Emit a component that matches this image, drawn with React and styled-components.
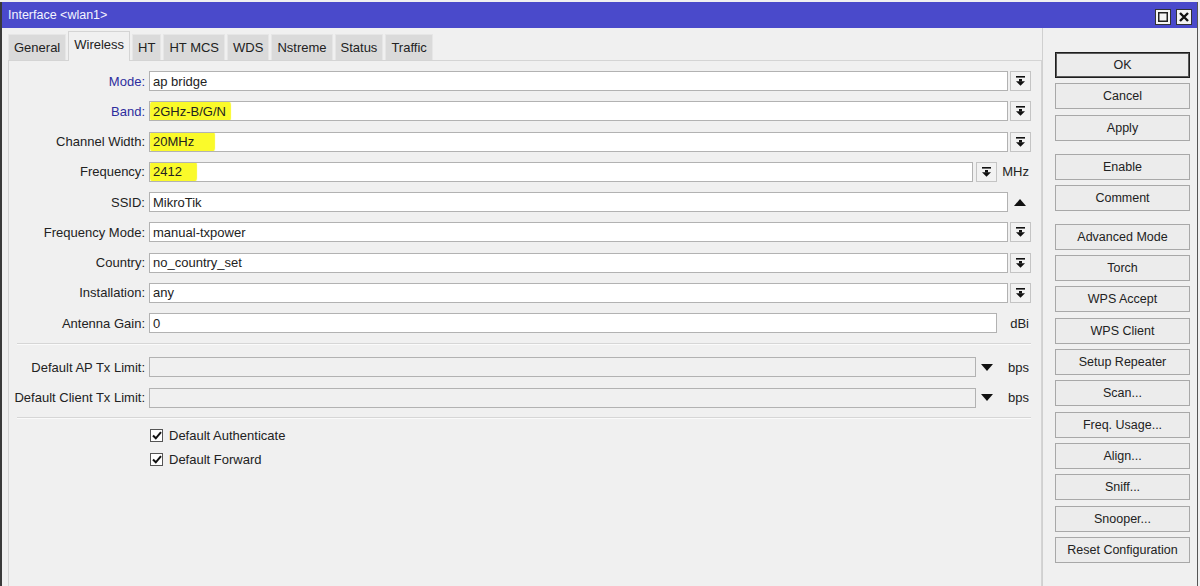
import React from "react";
import styled, { createGlobalStyle, css } from "styled-components";

const Global = createGlobalStyle`
  html, body { margin: 0; padding: 0; background: #f0f0f0; }
  body { font-family: "Liberation Sans", Arial, sans-serif; font-size: 13px; color: #222; }
  * { box-sizing: border-box; }
`;

const Window = styled.div`
  width: 1198px;
  height: 584px;
  margin-top: 2px;
  border-left: 2px solid #3a3a3a;
  border-right: 1px solid #555;
  display: flex;
  flex-direction: column;
  background: #f0f0f0;
  overflow: hidden;
`;

const TitleBar = styled.div`
  height: 26px;
  background: #4a4acb;
  display: flex;
  align-items: center;
  justify-content: space-between;
  padding: 0 5px 0 6px;
  color: #f4f4ff;
  font-size: 12.5px;
`;

const WinButtons = styled.div`
  display: flex;
  gap: 5px;
  margin-top: 4px;
`;

const WinBtn = styled.div`
  width: 16px;
  height: 16px;
  background: #f4f4f4;
  border: 1px solid #333;
  display: flex;
  align-items: center;
  justify-content: center;
`;

const Body = styled.div`
  flex: 1;
  display: flex;
`;

const Main = styled.div`
  width: 1040px;
  padding-left: 6px;
  display: flex;
  flex-direction: column;
`;

const Tabs = styled.div`
  display: flex;
  align-items: flex-end;
  gap: 2px;
  margin-top: 3px;
  height: 29px;
  position: relative;
  z-index: 1;
`;

const Tab = styled.div`
  height: 26px;
  padding: 0 5px;
  display: flex;
  align-items: center;
  background: #dadada;
  border: 1px solid #e6e6e6;
  border-bottom: none;
  color: #222;
  ${(p) =>
    p.$active &&
    css`
      height: 30px;
      margin-bottom: -1px;
      padding-bottom: 5px;
      background: #f0f0f0;
      border: 1px solid #d4d4d4;
      border-bottom: none;
    `}
`;

const Panel = styled.div`
  flex: 1;
  border: 1px solid #d4d4d4;
  border-bottom: none;
  padding-top: 5px;
  display: flex;
  flex-direction: column;
`;

const Row = styled.div`
  height: 30.25px;
  display: flex;
  align-items: center;
  padding-right: 10px;
`;

const Label = styled.div`
  width: 136px;
  margin-right: 4px;
  text-align: right;
  white-space: nowrap;
  color: ${(p) => (p.$changed ? "#2d2d9e" : "#222")};
`;

const Input = styled.div`
  flex: 1;
  height: 20px;
  background: ${(p) => (p.$disabled ? "#f0f0f0" : "#ffffff")};
  border: 1px solid #b2b2b2;
  display: flex;
  align-items: center;
  padding-left: 3px;
  white-space: nowrap;
  overflow: hidden;
`;

const Mark = styled.span`
  background: #fafa2a;
  border-radius: 3px;
  padding: 2px ${(p) => p.$extra || 4}px 2px 2px;
  margin-left: -2px;
  box-shadow: 0 0 1px 1px #fafa2a;
`;

const DropBtn = styled.div`
  width: 21px;
  height: 20px;
  margin-left: ${(p) => p.$gap || 2}px;
  border: 1px solid #c4c4c4;
  background: #f2f2f2;
  display: flex;
  align-items: center;
  justify-content: center;
`;

const Slot = styled.div`
  width: ${(p) => p.$w || 22}px;
  display: flex;
  align-items: center;
  justify-content: center;
`;

const Unit = styled.div`
  width: 34px;
  text-align: right;
  padding-right: 2px;
  color: #222;
`;

const Separator = styled.div`
  margin: ${(p) => p.$m || "5px 10px 7px 8px"};
  height: 2px;
  border-top: 1px solid #d6d6d6;
  border-bottom: 1px solid #fafafa;
`;

const CheckRow = styled.div`
  height: 24px;
  display: flex;
  align-items: center;
  padding-left: 141px;
  gap: 6px;
`;

const Box = styled.div`
  width: 13px;
  height: 13px;
  border: 1px solid #555;
  background: #fff;
  display: flex;
  align-items: center;
  justify-content: center;
`;

const Side = styled.div`
  flex: 1;
  border-left: 1px solid #d0d0d0;
  padding: 24px 0 0 12px;
  display: flex;
  flex-direction: column;
`;

const Button = styled.div`
  width: 135px;
  height: 26px;
  flex: none;
  margin-bottom: ${(p) => (p.$groupEnd ? 13 : 5.3)}px;
  border: 1px solid #a8a8a8;
  background: #ececec;
  display: flex;
  align-items: center;
  justify-content: center;
  color: #222;
  font-size: 12.5px;
  ${(p) =>
    p.$default &&
    css`
      border: 1px solid #1e1e1e;
      box-shadow: inset 0 0 0 1px #5a5a5a;
    `}
`;

const DropIcon = () => (
  <svg width="9" height="10" viewBox="0 0 9 10">
    <rect x="0" y="0" width="9" height="1.6" fill="#111" />
    <rect x="3" y="3" width="3" height="2.5" fill="#111" />
    <polygon points="0,5.2 9,5.2 4.5,9.8" fill="#111" />
  </svg>
);

const TriDown = () => (
  <svg width="12" height="7" viewBox="0 0 12 7">
    <polygon points="0,0 12,0 6,7" fill="#111" />
  </svg>
);

const TriUp = () => (
  <svg width="12" height="7" viewBox="0 0 12 7">
    <polygon points="0,7 12,7 6,0" fill="#111" />
  </svg>
);

const Check = () => (
  <svg width="10" height="9" viewBox="0 0 10 9">
    <polyline points="1,4.5 3.8,7.3 9,1.2" fill="none" stroke="#111" strokeWidth="2" />
  </svg>
);

const tabs = ["General", "Wireless", "HT", "HT MCS", "WDS", "Nstreme", "Status", "Traffic"];

const buttons = [
  { t: "OK", d: true },
  { t: "Cancel" },
  { t: "Apply", g: true },
  { t: "Enable" },
  { t: "Comment", g: true },
  { t: "Advanced Mode" },
  { t: "Torch" },
  { t: "WPS Accept" },
  { t: "WPS Client" },
  { t: "Setup Repeater" },
  { t: "Scan..." },
  { t: "Freq. Usage..." },
  { t: "Align..." },
  { t: "Sniff..." },
  { t: "Snooper..." },
  { t: "Reset Configuration" },
];

const SelectRow = ({ label, changed, children }) => (
  <Row>
    <Label $changed={changed}>{label}</Label>
    <Input>{children}</Input>
    <DropBtn>
      <DropIcon />
    </DropBtn>
  </Row>
);

export default function App() {
  return (
    <>
      <Global />
      <Window>
        <TitleBar>
          <span>Interface &lt;wlan1&gt;</span>
          <WinButtons>
            <WinBtn>
              <svg width="10" height="10" viewBox="0 0 10 10">
                <rect x="0.75" y="0.75" width="8.5" height="8.5" fill="none" stroke="#222" strokeWidth="1.5" />
              </svg>
            </WinBtn>
            <WinBtn>
              <svg width="10" height="10" viewBox="0 0 10 10">
                <path d="M1 1 L9 9 M9 1 L1 9" stroke="#111" strokeWidth="2.4" />
              </svg>
            </WinBtn>
          </WinButtons>
        </TitleBar>
        <Body>
          <Main>
            <Tabs>
              {tabs.map((t) => (
                <Tab key={t} $active={t === "Wireless"}>
                  {t}
                </Tab>
              ))}
            </Tabs>
            <Panel>
              <SelectRow label="Mode:" changed>ap bridge</SelectRow>
              <SelectRow label="Band:" changed>
                <Mark $extra={4}>2GHz-B/G/N</Mark>
              </SelectRow>
              <SelectRow label="Channel Width:">
                <Mark $extra={20}>20MHz</Mark>
              </SelectRow>
              <Row>
                <Label>Frequency:</Label>
                <Input>
                  <Mark $extra={14}>2412</Mark>
                </Input>
                <DropBtn $gap={3}>
                  <DropIcon />
                </DropBtn>
                <Unit>MHz</Unit>
              </Row>
              <Row>
                <Label>SSID:</Label>
                <Input>MikroTik</Input>
                <Slot $w={23}>
                  <TriUp />
                </Slot>
              </Row>
              <SelectRow label="Frequency Mode:">manual-txpower</SelectRow>
              <SelectRow label="Country:">no_country_set</SelectRow>
              <SelectRow label="Installation:">any</SelectRow>
              <Row>
                <Label>Antenna Gain:</Label>
                <Input>0</Input>
                <Unit>dBi</Unit>
              </Row>
              <Separator />
              <Row>
                <Label>Default AP Tx Limit:</Label>
                <Input $disabled />
                <Slot $w={21}>
                  <TriDown />
                </Slot>
                <Unit>bps</Unit>
              </Row>
              <Row>
                <Label>Default Client Tx Limit:</Label>
                <Input $disabled />
                <Slot $w={21}>
                  <TriDown />
                </Slot>
                <Unit>bps</Unit>
              </Row>
              <Separator $m="4px 10px 5px 8px" />
              <CheckRow>
                <Box>
                  <Check />
                </Box>
                Default Authenticate
              </CheckRow>
              <CheckRow>
                <Box>
                  <Check />
                </Box>
                Default Forward
              </CheckRow>
            </Panel>
          </Main>
          <Side>
            {buttons.map((b) => (
              <Button key={b.t} $default={b.d} $groupEnd={b.g}>
                {b.t}
              </Button>
            ))}
          </Side>
        </Body>
      </Window>
    </>
  );
}
